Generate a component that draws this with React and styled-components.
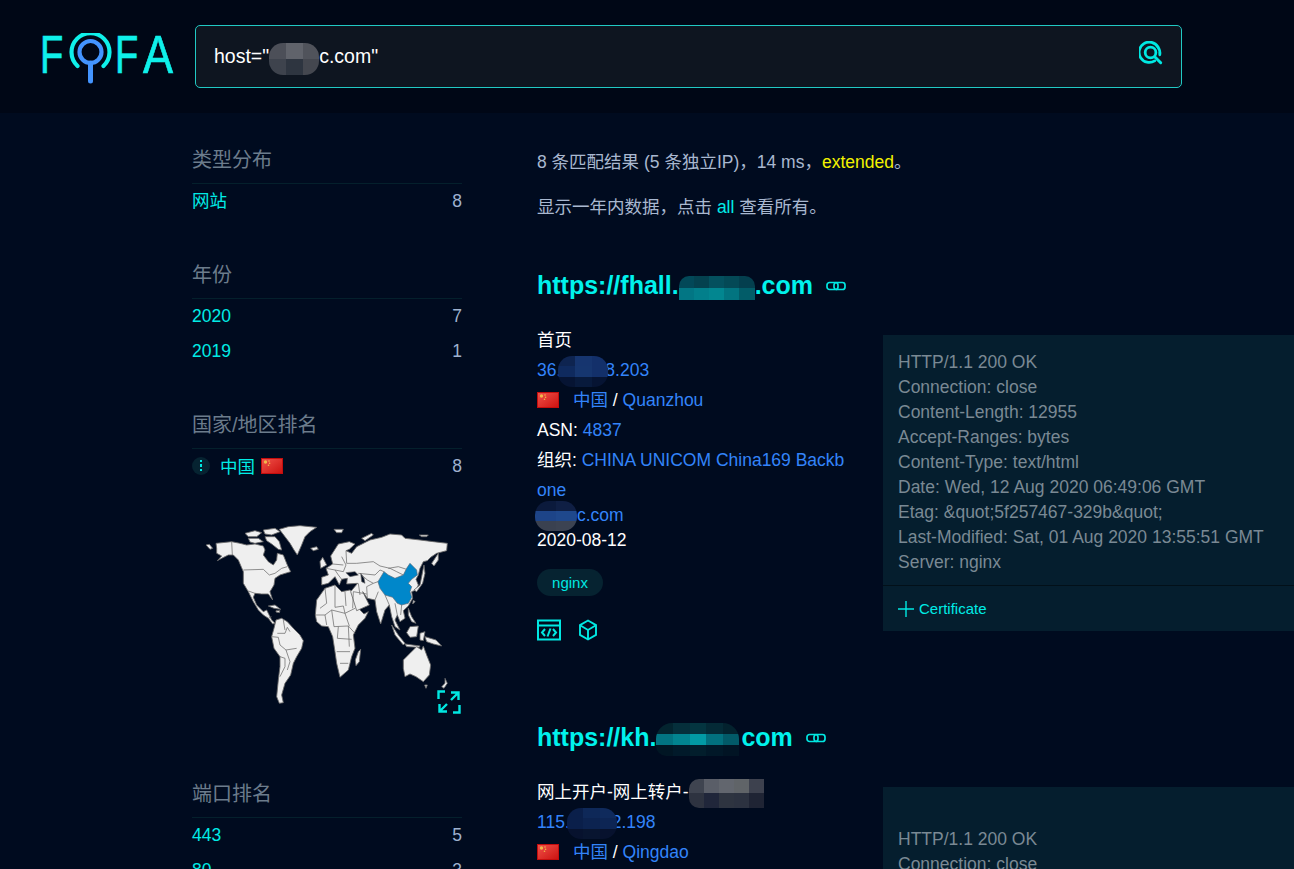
import React from 'react';
import styled, {createGlobalStyle} from 'styled-components';

const GlobalStyle = createGlobalStyle`
  html, body {
    margin: 0;
    height: 100%;
    overflow: hidden;
    background: #000b1f;
    font-family: "Liberation Sans", "Noto Sans CJK SC", sans-serif;
  }
`

const Header = styled.header`
  height: 113px;
  background: #000716;
  display: flex;
  align-items: flex-start;
  padding: 25px 0 0 42px;
  box-sizing: border-box;
`
const Logo = styled.div`
  width: 153px;
  height: 60px;
  display: flex;
  align-items: flex-start;
  color: #0ff0ea;
  font-family: "Liberation Sans", sans-serif;
  font-size: 53px;
  line-height: 60px;
  flex-shrink: 0;
  svg { margin: 8px 0 0 0; flex-shrink: 0; width: 43px; height: 52px; }
`
const LogoLetter = styled.span`
  display: inline-block;
  transform-origin: left center;
  transform: scaleX(${p => p.$scale});
  width: ${p => p.$w}px;
  margin-left: ${p => p.$ml || 0}px;
  -webkit-text-stroke: 0.7px #0ff0ea;
`
const SearchBox = styled.div`
  width: 987px;
  height: 63px;
  box-sizing: border-box;
  border: 1px solid #21c9c4;
  border-radius: 5px;
  background: #0e1520;
  display: flex;
  align-items: center;
  justify-content: space-between;
  padding: 0 18px 0 18px;
  color: #fff;
  font-size: 19.5px;
  svg { margin-top: -8px; }
`
const Mosaic = styled.span`
  display: inline-grid;
  grid-template-columns: repeat(${p => p.$cols}, 1fr);
  grid-auto-rows: 1fr;
  width: ${p => p.$w}px;
  height: ${p => p.$h}px;
  border-radius: ${p => p.$radius || '14px'};
  overflow: hidden;
  vertical-align: middle;
  margin: -12px ${p => p.$mr || 0}px -12px ${p => p.$ml || 0}px;
  position: relative;
  top: ${p => p.$top || 0}px;
`
const Cell = styled.i`
  display: block;
  background: ${p => p.$c};
`
const Blur = ({cols, colors, ...rest}) => (
  <Mosaic $cols={cols} {...rest}>
    {colors.map((c, i) => <Cell key={i} $c={c}/>)}
  </Mosaic>
)

const Page = styled.div`
  display: flex;
  padding-left: 192px;
`
const Sidebar = styled.aside`
  width: 270px;
  flex-shrink: 0;
  padding-top: 33px;
`
const Section = styled.section`
  margin-bottom: 42px;
`
const SectionTitle = styled.h4`
  margin: 0;
  font-weight: 400;
  font-size: 20px;
  line-height: 28px;
  padding-bottom: 9px;
  color: #6c7c8c;
  border-bottom: 1px solid #04202c;
`
const StatRow = styled.div`
  height: 35px;
  display: flex;
  align-items: center;
  justify-content: space-between;
  font-size: 17.5px;
  color: #00ece6;
  em {
    font-style: normal;
    color: #9fb2cf;
  }
`
const RowLabel = styled.span`
  display: flex;
  align-items: center;
  padding-bottom: ${p => p.$lift || 0}px;
`
const DotBadge = styled.span`
  width: 18px;
  height: 18px;
  border-radius: 50%;
  background: #062331;
  display: flex;
  flex-direction: column;
  align-items: center;
  justify-content: center;
  gap: 2px;
  margin-right: 10px;
  i {
    width: 2.5px;
    height: 2.5px;
    background: #00e8e2;
    display: block;
  }
`
const MapBox = styled.div`
  position: relative;
  height: 254px;
  svg.world { display: block; width: 270px; height: 254px; }
`
const Expand = styled.span`
  position: absolute;
  right: 1px;
  bottom: 24px;
  width: 24px;
  height: 24px;
`

const Main = styled.main`
  flex: 1;
  min-width: 0;
  margin-left: 75px;
  padding-top: 37px;
`
const Summary = styled.p`
  margin: 0 0 20px;
  font-size: 17.5px;
  line-height: 25px;
  color: #a9b8d0;
  b { font-weight: 400; color: #f2f200; }
  a { color: #00ece6; }
`
const Card = styled.article`
  margin-top: ${p => p.$first ? 48 : 79}px;
`
const CardTitle = styled.h3`
  margin: 0 0 23px;
  font-size: 25px;
  line-height: 34px;
  font-weight: 700;
  color: #00f2ec;
  white-space: nowrap;
  display: flex;
  align-items: center;
  svg { margin-left: 13px; margin-top: 2px; }
`
const Columns = styled.div`
  display: flex;
  align-items: flex-start;
`
const Info = styled.div`
  width: 310px;
  flex-shrink: 0;
  margin-right: 36px;
`
const Line = styled.div`
  font-size: 17.5px;
  line-height: ${p => p.$tight ? 25 : 30}px;
  color: #fff;
  word-break: break-all;
  white-space: ${p => p.$nowrap ? 'nowrap' : 'normal'};
  margin-bottom: ${p => p.$mb || 0}px;
  a { color: #3384fa; }
`
const Flag = styled.svg`
  width: 22px;
  height: 16px;
  vertical-align: -2px;
  margin: ${p => p.$m || '0 14px 0 0'};
`
const Tag = styled.span`
  display: block;
  width: 66px;
  height: 27px;
  margin-top: 16px;
  border-radius: 14px;
  background: #062331;
  color: #00e8e2;
  font-size: 15px;
  line-height: 27px;
  text-align: center;
`
const Actions = styled.div`
  display: flex;
  align-items: center;
  gap: 17px;
  margin-top: 23px;
`
const Panel = styled.div`
  flex: 1;
  min-width: 0;
  margin-top: 10px;
  background: #051e2e;
`
const Headers = styled.pre`
  margin: 0;
  padding: ${p => p.$blank ? 40 : 15}px 15px 10px;
  font-family: "Liberation Sans", "Noto Sans CJK SC", sans-serif;
  font-size: 17.5px;
  line-height: 25px;
  color: #7a8994;
  border-bottom: 1px solid #021019;
`
const CertRow = styled.div`
  height: 45px;
  padding-left: 15px;
  display: flex;
  align-items: center;
  gap: 5px;
  font-size: 15px;
  color: #00ece6;
`

const CYAN = '#00e8e2';

const SearchIcon = () => (
  <svg width="24" height="24" viewBox="0 0 26 26" fill="none" stroke={CYAN} strokeLinecap="round">
    <path d="M20.5 6.5A11 11 0 1 0 17 21.5" strokeWidth="3"/>
    <path d="M20.5 6.5A11 11 0 0 1 22.5 15" strokeWidth="3"/>
    <circle cx="12.5" cy="12.5" r="5.8" strokeWidth="3"/>
    <path d="M17 17l6.5 6.5" strokeWidth="3.2"/>
  </svg>
)
const LogoMark = () => (
  <svg viewBox="0 0 43 52" fill="none" strokeLinecap="round">
    <path d="M8.5 33A19 19 0 1 1 34.5 33" stroke="#0ff0ea" strokeWidth="4.2"/>
    <circle cx="21.5" cy="19" r="11" stroke="#4394ff" strokeWidth="4.2"/>
    <path d="M21.5 30V48" stroke="#4394ff" strokeWidth="5"/>
  </svg>
)
const LinkIcon = () => (
  <svg width="20" height="10" viewBox="0 0 20 10" fill="none" stroke={CYAN} strokeWidth="1.7">
    <rect x="1" y="1.5" width="11" height="7" rx="2.5"/>
    <rect x="8" y="1.5" width="11" height="7" rx="2.5"/>
  </svg>
)
const FlagCN = ({m, id}) => (
  <Flag viewBox="0 0 22 16" $m={m}>
    <defs>
      <linearGradient id={id} x1="0" y1="0" x2="1" y2="1">
        <stop offset="0" stopColor="#f0524a"/>
        <stop offset="1" stopColor="#cc1210"/>
      </linearGradient>
    </defs>
    <rect x="0.5" y="0.5" width="21" height="15" fill={`url(#${id})`} stroke="#c40d0d"/>
    <circle cx="4.5" cy="4" r="1.7" fill="#f2b84a"/>
    <circle cx="8" cy="3" r="0.8" fill="#f2b84a"/>
    <circle cx="8.6" cy="5.2" r="0.8" fill="#f2b84a"/>
    <circle cx="7.5" cy="7.2" r="0.8" fill="#f2b84a"/>
  </Flag>
)
const CodeIcon = () => (
  <svg width="24" height="22" viewBox="0 0 24 22" fill="none" stroke={CYAN} strokeWidth="2">
    <rect x="1" y="1.5" width="22" height="19"/>
    <path d="M1 6.5h22"/>
    <path d="M8 10l-3 3.5 3 3.5M16 10l3 3.5-3 3.5M13.5 9.5l-3 8"/>
  </svg>
)
const BoxIcon = () => (
  <svg width="20" height="22" viewBox="0 0 20 22" fill="none" stroke={CYAN} strokeWidth="1.9">
    <path d="M10 1.5l8 4.6v9.8l-8 4.6-8-4.6V6.1z"/>
    <path d="M2.5 6.5L10 11l7.5-4.5M10 11v9.5"/>
  </svg>
)
const PlusIcon = () => (
  <svg width="16" height="16" viewBox="0 0 16 16" stroke={CYAN} strokeWidth="1.4">
    <path d="M8 0v16M0 8h16"/>
  </svg>
)
const ExpandIcon = () => (
  <svg width="24" height="24" viewBox="0 0 24 24" fill="none" stroke={CYAN} strokeWidth="2.4">
    <path d="M1.5 9V1.5H8M22.5 15v7.5H16"/>
    <path d="M14 2.5h7.5V10M21.5 2.5L14 10M2.5 14v7.5H10M2.5 21.5L10 14"/>
  </svg>
)

// americas, coordinates are from the left map crop
const WEST_LAND = [
  'M48 70L95 65L120 70L140 75L165 72L190 78L195 90L190 105L205 125L220 135L230 120L232 100L250 105L262 135L272 155L262 158L240 165L225 175L222 195L210 215L218 240L205 222L185 222L165 220L160 232L170 255L190 275L200 270L205 280L215 300L225 310L218 312L205 295L190 285L175 270L160 245L145 215L130 190L130 155L115 120L100 105L85 105L65 115L52 122L65 108L50 100L50 85Z',
  'M238 28L265 20L300 17L350 22L330 35L315 50L305 75L292 105L282 90L270 70L255 50Z',
  'M135 40L165 32L185 38L170 50L145 50Z',
  'M145 55L175 55L190 65L165 70L150 66Z',
  'M190 30L225 25L240 35L215 45L195 42Z',
  'M195 50L225 50L238 65L245 90L235 88L215 72L200 62Z',
  'M332 85L350 80L355 88L340 92Z',
  'M18 75L28 73L38 85L30 88Z',
  'M205 258L225 255L242 268L222 265Z',
  'M228 272L240 272L238 278L228 276Z',
  'M228 300L245 295L262 305L280 325L300 345L310 362L305 385L290 410L280 430L272 465L255 490L245 525L250 548L238 550L230 530L235 480L240 440L240 410L222 385L215 350L222 325Z',
]
const WEST_BORDERS = [
  'M95 65L97 105',
  'M130 150L190 148L208 165L225 160L245 145L262 140',
  'M145 213L165 220',
  'M205 295L215 290',
  'M232 340L255 340L262 322',
  'M215 350L235 352L240 375L258 390L270 425L262 450',
  'M240 410L255 415L255 440L240 470',
  'M262 322L270 335',
  'M250 300L255 330',
  'M258 390L290 385',
]

// old world and oceania, coordinates are from the right map crop
const EAST_LAND = [
  'M16 285L20 240L45 205L75 195L95 215L120 210L135 222L150 270L162 282L175 275L165 295L145 315L130 345L135 385L125 410L115 450L90 472L80 430L75 395L68 350L55 320L35 318L20 305Z',
  'M145 395L152 388L148 425L138 437L136 420Z',
  'M35 172L55 165L48 145L68 132L62 108L85 72L118 65L135 72L118 88L108 92L125 100L140 80L180 60L215 52L240 42L275 45L285 55L330 60L370 65L412 70L410 92L380 100L362 112L352 122L340 125L330 145L325 165L318 178L325 195L318 210L305 215L308 235L295 258L280 272L285 295L270 305L262 285L255 300L270 330L255 320L245 290L238 255L225 270L212 312L200 275L195 240L172 235L158 215L178 255L140 272L122 215L143 190L110 192L112 175L95 178L88 195L75 170L55 190L35 195Z',
  'M30 125L38 112L50 135L32 145Z',
  'M72 28L100 28L95 38L80 38Z',
  'M155 55L185 40L190 45L165 62Z',
  'M328 45L355 45L350 50L335 50Z',
  'M365 130L385 100L385 120L372 138Z',
  'M335 170L342 135L345 160L338 190L320 215L312 210L330 195Z',
  'M245 315L265 345L285 370L280 375L255 345Z',
  'M285 372L330 378L328 382L290 380Z',
  'M300 320L325 318L320 350L300 352L290 338Z',
  'M330 340L345 335L340 362L330 360Z',
  'M345 350L378 360L395 378L370 372L350 365Z',
  'M295 265L305 290L318 310L305 305L295 285Z',
  'M310 240L315 245L308 252Z',
  'M280 420L300 400L320 380L335 390L340 378L350 405L362 435L358 465L340 485L318 470L300 462L285 470L280 445Z',
  'M344 495L352 495L348 505Z',
  'M405 475L412 490L402 505L395 500L405 490Z',
]
const EAST_BORDERS = [
  'M45 205L50 250L30 265',
  'M16 285L45 285L65 270L105 280L135 265',
  'M75 197L75 262L100 258L105 280',
  'M105 215L108 258',
  'M130 215L128 265',
  'M65 270L72 320',
  'M72 320L115 318L135 340',
  'M85 320L82 355L125 358',
  'M80 395L120 395',
  'M115 318L118 380',
  'M90 430L115 430',
  'M45 285L50 315',
  'M105 280L118 318',
  'M48 145L75 150L100 155L108 135L95 110',
  'M75 150L85 165L95 178',
  'M68 132L100 135',
  'M108 92L110 130',
  'M145 190L150 225',
  'M145 160L195 165L210 150L222 155',
  'M110 130L140 130L190 125L210 138L240 145L260 155L280 165',
  'M235 145L265 140L290 148',
  'M155 165L172 180L190 190L204 185',
  'M172 235L170 200L190 190',
  'M195 240L205 215',
  'M225 225L238 255',
  'M255 250L262 285',
  'M275 255L272 285',
  'M130 215L170 222',
]
const SEAS = [
  'M108 158L135 155L145 165L120 170Z',
  'M152 160L162 175L165 190L155 185Z',
]
const CHINA = 'M204 185L222 155L235 165L255 175L280 165L290 145L300 130L320 150L322 165L305 178L295 190L305 200L300 215L305 232L295 250L275 255L262 250L248 232L225 225L210 205Z'

const LandGroup = ({land, borders, transform, children}) => (
  <g transform={transform}>
    <g fill="#efefef" stroke="#6a6a6a" strokeWidth="2.6" strokeLinejoin="round">
      {land.map((d, i) => <path key={i} d={d}/>)}
    </g>
    <g fill="none" stroke="#6a6a6a" strokeWidth="2.2">
      {borders.map((d, i) => <path key={i} d={d}/>)}
    </g>
    {children}
  </g>
)

const WorldMap = () => (
  <svg className="world" viewBox="192 484 270 254">
    <LandGroup land={WEST_LAND} borders={WEST_BORDERS} transform="translate(200 520) scale(0.3333)"/>
    <LandGroup land={EAST_LAND} borders={EAST_BORDERS} transform="translate(310 520) scale(0.3333)">
      {SEAS.map((d, i) => <path key={i} d={d} fill="#000b1f" stroke="#6a6a6a" strokeWidth="2"/>)}
      <path d={CHINA} fill="#0087ca" stroke="#5a6a78" strokeWidth="2"/>
    </LandGroup>
  </svg>
)

const GREY_1 = ['#4c4f58', '#60636b', '#50535b', '#3e434d', '#2e3540', '#44474f']
const TEAL_1 = ['#024858', '#04414f', '#04505e', '#044956', '#043f4e', '#027684', '#027f8b', '#028690', '#027480', '#025c68']
const BLUE_1 = ['#0e2450', '#16356f', '#13306a', '#0f2a5e', '#16366f', '#13306a', '#061433', '#081a3c', '#061433']
const BLUE_2 = ['#0b1a3c', '#0f1f44', '#1d4488', '#1f488c', '#3a4150', '#3c4352']
const TEAL_2 = ['#03242f', '#052f3b', '#043540', '#042a36', '#03222e', '#027482', '#028490', '#029aa4', '#02707e', '#025a68', '#011624', '#011a2a', '#021e2c', '#011828', '#011424']
const GREY_2 = ['#3f4450', '#5a5e68', '#62666e', '#606468', '#3d414e', '#2e3340', '#20263a', '#2e3440', '#2c3240', '#1f2434']
const BLUE_3 = ['#0a1f4a', '#0e2858', '#0f2a5c', '#0a1f4a', '#0c2350', '#0d2554', '#07122e', '#081530', '#07122e']

const RESPONSE_1 = `HTTP/1.1 200 OK
Connection: close
Content-Length: 12955
Accept-Ranges: bytes
Content-Type: text/html
Date: Wed, 12 Aug 2020 06:49:06 GMT
Etag: &quot;5f257467-329b&quot;
Last-Modified: Sat, 01 Aug 2020 13:55:51 GMT
Server: nginx`

const RESPONSE_2 = `HTTP/1.1 200 OK
Connection: close
Content-Length: 8042`

const Stat = ({label, count, lift}) => (
  <StatRow>
    <RowLabel $lift={lift}>{label}</RowLabel>
    <em>{count}</em>
  </StatRow>
)

const App = () => (
  <>
    <GlobalStyle/>
    <Header>
      <Logo>
        <LogoLetter $scale={0.72} $w={29} $ml={-2}>F</LogoLetter>
        <LogoMark/>
        <LogoLetter $scale={0.72} $w={28} $ml={3}>F</LogoLetter>
        <LogoLetter $scale={0.85} $w={31}>A</LogoLetter>
      </Logo>
      <SearchBox>
        <span>host="<Blur cols={3} colors={GREY_1} $w={50} $h={32} $top={1}/>c.com"</span>
        <SearchIcon/>
      </SearchBox>
    </Header>
    <Page>
      <Sidebar>
        <Section>
          <SectionTitle>类型分布</SectionTitle>
          <Stat label="网站" count="8" lift={4}/>
        </Section>
        <Section>
          <SectionTitle>年份</SectionTitle>
          <Stat label="2020" count="7"/>
          <Stat label="2019" count="1"/>
        </Section>
        <Section>
          <SectionTitle>国家/地区排名</SectionTitle>
          <StatRow>
            <RowLabel $lift={2}>
              <DotBadge><i/><i/><i/></DotBadge>
              中国
              <FlagCN m="0 0 0 6px" id="flag-side"/>
            </RowLabel>
            <em>8</em>
          </StatRow>
          <MapBox>
            <WorldMap/>
            <Expand><ExpandIcon/></Expand>
          </MapBox>
        </Section>
        <Section>
          <SectionTitle>端口排名</SectionTitle>
          <Stat label="443" count="5"/>
          <Stat label="80" count="3"/>
        </Section>
      </Sidebar>
      <Main>
        <Summary>8 条匹配结果 (5 条独立IP)，14 ms，<b>extended</b>。</Summary>
        <Summary>显示一年内数据，点击 <a>all</a> 查看所有。</Summary>
        <Card $first>
          <CardTitle>
            <span>https://fhall.<Blur cols={5} colors={TEAL_1} $w={76} $h={24} $top={1} $radius="10px 10px 0 0"/>.com</span>
            <LinkIcon/>
          </CardTitle>
          <Columns>
            <Info>
              <Line>首页</Line>
              <Line><a>36.<Blur cols={3} colors={BLUE_1} $w={50} $h={31} $ml={-3} $mr={-3}/>8.203</a></Line>
              <Line><FlagCN id="flag-a"/><a>中国</a> / <a>Quanzhou</a></Line>
              <Line>ASN: <a>4837</a></Line>
              <Line $mb={-2}>组织: <a>CHINA UNICOM China169 Backbone</a></Line>
              <Line $tight><a><Blur cols={2} colors={BLUE_2} $w={42} $h={30} $ml={-2}/>c.com</a></Line>
              <Line $tight>2020-08-12</Line>
              <Tag>nginx</Tag>
              <Actions><CodeIcon/><BoxIcon/></Actions>
            </Info>
            <Panel>
              <Headers>{RESPONSE_1}</Headers>
              <CertRow><PlusIcon/>Certificate</CertRow>
            </Panel>
          </Columns>
        </Card>
        <Card>
          <CardTitle>
            <span>https://kh.<Blur cols={5} colors={TEAL_2} $w={83} $h={33} $mr={2} $radius="16px 16px 0 10px"/>com</span>
            <LinkIcon/>
          </CardTitle>
          <Columns>
            <Info>
              <Line $nowrap>网上开户-网上转户-<Blur cols={5} colors={GREY_2} $w={75} $h={29} $radius="10px 0 0 10px"/></Line>
              <Line><a>115.<Blur cols={3} colors={BLUE_3} $w={50} $h={31} $ml={-3} $mr={-5}/>2.198</a></Line>
              <Line><FlagCN id="flag-b"/><a>中国</a> / <a>Qingdao</a></Line>
              <Line>ASN: <a>4837</a></Line>
            </Info>
            <Panel>
              <Headers $blank>{RESPONSE_2}</Headers>
            </Panel>
          </Columns>
        </Card>
      </Main>
    </Page>
  </>
)

export default App;
